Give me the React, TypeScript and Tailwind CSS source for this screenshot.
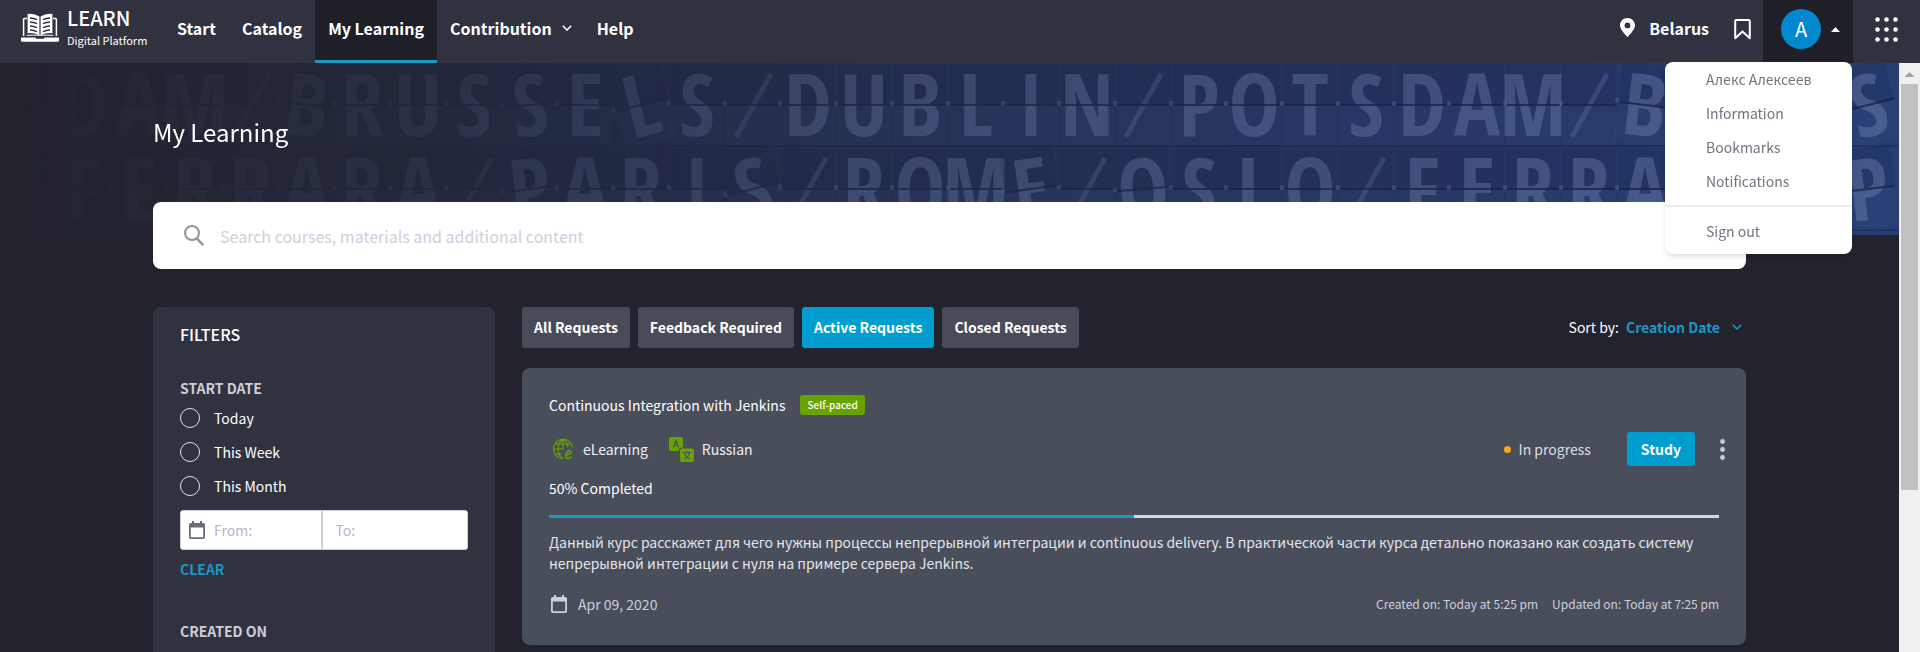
import React from "react";

const TOP_ROW = "SDAM/BRUSSELS/DUBLIN/POTSDAM/BRUSS";
const BOTTOM_ROW = "/FERRARA/PARIS/ROME/OSLO/FERRARA/P";
const TOP_TILT: Record<number, number> = { 5: 7, 9: -5, 11: -14, 29: 7, 33: -14 };
const BOTTOM_TILT: Record<number, number> = { 9: -7, 13: -14, 18: -8, 20: -5, 33: -7 };

function BoardRow({ text, tilt, mid }: { text: string; tilt: Record<number, number>; mid: number }) {
  return (
    <g>
      {text.split("").map((ch, i) => {
        const x = 28 + i * 56 - Math.round(i / 4);
        return (
          <g key={i} transform={`rotate(${tilt[i] ?? 0} ${x} ${mid})`}>
            <rect x={x - 27} y={mid - 41} width={54} height={41} fill="#141a36" opacity={0.14} />
            <rect x={x - 27} y={mid + 1} width={54} height={39} fill="#5a6ea6" opacity={0.07} />
            {ch === "/" ? (
              <path d={`M${x + 18} ${mid - 31} L${x - 17} ${mid + 32}`} stroke="#8f9fcb" strokeWidth={5} opacity={0.2} />
            ) : (
              <text
                x={x}
                y={mid + 31}
                textAnchor="middle"
                fontSize={86}
                fontWeight={700}
                fill="#8f9fcb"
                opacity={0.3}
                fontFamily="'Open Sans Condensed','Roboto Condensed','Liberation Sans Narrow','Liberation Sans',sans-serif"
              >
                {ch}
              </text>
            )}
            <rect x={x - 27} y={mid - 1} width={54} height={2} fill="#1b2341" opacity={0.8} />
            <rect x={x - 30} y={mid - 4} width={4} height={5} fill="#5b6c9b" opacity={0.4} />
          </g>
        );
      })}
      <rect x={0} y={mid + 40} width={1920} height={2} fill="#161c36" opacity={0.35} />
    </g>
  );
}

function Board() {
  return (
    <svg aria-hidden="true" className="absolute inset-0 h-full w-full" viewBox="0 0 1899 172" preserveAspectRatio="xMaxYMin slice">
      <defs>
        <linearGradient id="bg" x1="0" x2="1" y1="0" y2="0">
          <stop offset="0" stopColor="#22232d" />
          <stop offset="0.22" stopColor="#22273a" />
          <stop offset="0.5" stopColor="#252f54" />
          <stop offset="0.78" stopColor="#253563" />
          <stop offset="1" stopColor="#263e74" />
        </linearGradient>
        <linearGradient id="fade" x1="0" x2="1" y1="0" y2="0">
          <stop offset="0.01" stopColor="#fff" stopOpacity="0" />
          <stop offset="0.1" stopColor="#fff" stopOpacity="0.12" />
          <stop offset="0.25" stopColor="#fff" stopOpacity="0.3" />
          <stop offset="0.45" stopColor="#fff" stopOpacity="0.75" />
          <stop offset="0.9" stopColor="#fff" stopOpacity="1" />
        </linearGradient>
        <mask id="m" style={{ maskType: "alpha" }}>
          <rect width="1899" height="172" fill="url(#fade)" />
        </mask>
      </defs>
      <rect width="1899" height="172" fill="url(#bg)" />
      <g mask="url(#m)">
        <BoardRow text={TOP_ROW} tilt={TOP_TILT} mid={42} />
        <BoardRow text={BOTTOM_ROW} tilt={BOTTOM_TILT} mid={126} />
      </g>
    </svg>
  );
}

function Logo() {
  return (
    <svg aria-hidden="true" viewBox="0 0 38 30" className="h-[30px] w-[38px]" fill="none">
      <path d="M6 5.5H3.4Q2.6 5.5 2.6 6.4V23M32 5.5H34.6Q35.4 5.5 35.4 6.4V23" stroke="#fff" strokeWidth="1.5" />
      <path d="M6.6 1Q13 .2 18.4 3.4V22.4Q13 19.6 6.6 20.2Z" fill="#fff" />
      <path d="M31.4 1Q25 .2 19.6 3.4V22.4Q25 19.6 31.4 20.2Z" fill="#fff" />
      <path d="M5.6 22.2H32.4" stroke="#fff" strokeWidth="1" />
      <path
        d="M9 5Q12.6 5 16 6.6M9 9Q12.6 9 16 10.6M9 13Q12.6 13 16 14.6M9 17Q12.6 17 16 18.6M29 5Q25.4 5 22 6.6M29 9Q25.4 9 22 10.6M29 13Q25.4 13 22 14.6M29 17Q25.4 17 22 18.6"
        stroke="#31323f"
        strokeWidth="1.3"
      />
      <path d="M0 24.5H14L15.5 25.8H22.5L24 24.5H38V27.6Q38 28.8 36.6 28.8H1.4Q0 28.8 0 27.6Z" fill="#fff" />
    </svg>
  );
}

function Chevron({ className }: { className: string }) {
  return (
    <svg aria-hidden="true" viewBox="0 0 10 6" className={className} fill="none" stroke="currentColor" strokeWidth="1.6">
      <path d="M.8.8 5 5 9.2.8" />
    </svg>
  );
}

function CalendarIcon({ className }: { className: string }) {
  return (
    <svg aria-hidden="true" viewBox="0 0 16 18" className={className}>
      <path
        fill="currentColor"
        fillRule="evenodd"
        d="M3 0h2v2h6V0h2v2h1.2Q16 2 16 3.8v12.4Q16 18 14.2 18H1.8Q0 18 0 16.2V3.8Q0 2 1.8 2H3ZM1.8 6.4v9.8h12.4V6.4Z"
      />
    </svg>
  );
}

function GlobeIcon() {
  return (
    <svg aria-hidden="true" viewBox="0 0 22 22" className="h-[22px] w-[22px]" fill="none" stroke="#67a300" strokeWidth="1.2">
      <path d="M20.6 9.5A9.6 9.6 0 1 0 11 20.6M11 1.4V11M11 1.4C7.5 3.5 6 7 6 11S7.5 18.6 11 20.6M11 1.4C14 3.2 15.8 6 16 9.5M2.8 6H19.2M1.4 11H11.5M2.8 16H9.5" />
      <path d="M13.4 17 19.2 15.4C19.2 12.8 17.4 12 15.8 13.2 13.6 14.9 12.8 19.8 15.4 20.4 17 20.7 18.2 19.6 19.2 18.4" strokeWidth="1.5" />
    </svg>
  );
}

function LanguageIcon() {
  return (
    <svg aria-hidden="true" viewBox="0 0 25 25" className="h-[25px] w-[25px]">
      <rect width="14" height="14" rx="2" fill="#67a300" />
      <path d="M4.3 10.5 7 3.5 9.700 10.500M5.300 8.200H8.700" stroke="#494e5b" strokeWidth="1.2" fill="none" />
      <rect x="10" y="10.5" width="15" height="14.5" rx="3" fill="#494e5b" />
      <rect x="11" y="11.5" width="14" height="13.5" rx="2" fill="#67a300" />
      <path d="M14 15.5H22M18 14V15.5M15.5 16C16 18.500 18 20.500 21 22M20.500 16C20 18.500 18 20.500 15 22" stroke="#494e5b" strokeWidth="1.2" fill="none" />
    </svg>
  );
}

const navLink = "flex h-full items-center px-[13px] pb-2";

function Header() {
  return (
    <header className="relative z-10 flex h-[63px] shrink-0 bg-[#31323f] text-[16px] leading-6 font-bold text-white">
      <a href="#" className="flex items-start gap-2 pt-[13px] pl-[21px] font-normal">
        <Logo />
        <span className="flex w-[97px] flex-col whitespace-nowrap">
          <span className="-mt-[7px] text-[20px] leading-[24px] font-medium">LEARN</span>
          <span className="text-[11px] leading-5">Digital Platform</span>
        </span>
      </a>
      <nav className="flex h-full">
        <a href="#" className={navLink}>Start</a>
        <a href="#" className={navLink}>Catalog</a>
        <a href="#" aria-current="page" className="flex h-full items-center border-b-[3px] border-[#1c97c1] bg-[#1f2027] px-[13px] pb-[5px]">
          My Learning
        </a>
        <button type="button" className="flex h-full items-center gap-[10px] pr-3 pb-2 pl-[13px]">
          Contribution
          <Chevron className="h-[6px] w-[10px]" />
        </button>
        <a href="#" className={navLink}>Help</a>
      </nav>
      <div className="ml-auto flex h-full items-center">
        <button type="button" className="flex h-full items-center gap-[14px] pb-2">
          <svg aria-hidden="true" viewBox="0 0 15 19" className="h-[19px] w-[15px]">
            <path fill="#fff" fillRule="evenodd" d="M7.5 0C11.7 0 15 3.2 15 7.3 15 12.2 7.5 19 7.5 19S0 12.2 0 7.3C0 3.2 3.3 0 7.5 0Zm0 4.5a2.9 2.9 0 1 0 0 5.8 2.9 2.9 0 0 0 0-5.8Z" />
          </svg>
          Belarus
        </button>
        <button type="button" aria-label="Bookmarks" className="h-full pr-3 pb-[5px] pl-[25px]">
          <svg aria-hidden="true" viewBox="0 0 17 21" className="h-[21px] w-[17px]" fill="none" stroke="#fff" strokeWidth="2">
            <path d="M1.2 19.2V2.2Q1.2 1 2.4 1H14.6Q15.8 1 15.8 2.2V19.2L8.5 12.4Z" strokeLinejoin="round" />
          </svg>
        </button>
        <button type="button" aria-label="Account" aria-expanded="true" className="flex h-full items-center gap-[10px] bg-[#1f2027] pr-[13px] pb-[5px] pl-[18px]">
          <span className="flex size-10 items-center justify-center rounded-full bg-[#0288d1] text-[20px] font-normal">A</span>
          <svg aria-hidden="true" viewBox="0 0 9 5" className="h-[5px] w-[9px]"><path d="M0 5 4.5 0 9 5Z" fill="#fff" /></svg>
        </button>
        <button type="button" aria-label="Applications" className="h-full px-[22px] pb-[5px]">
          <svg aria-hidden="true" viewBox="0 0 23 25" className="h-[25px] w-[23px]" fill="#fff">
            {[2.5, 11.5, 20.5].map((x) => [2.5, 12.5, 22.5].map((y) => <circle key={`${x}-${y}`} cx={x} cy={y} r={2.3} />))}
          </svg>
        </button>
      </div>
      <ul className="absolute top-[62px] right-[68px] w-[187px] rounded-lg bg-white pb-[6px] text-[14px] leading-[34px] font-normal whitespace-nowrap text-[#72747f] shadow-md">
        <li><a href="#" className="block pl-[41px]">Алекс Алексеев</a></li>
        <li><a href="#" className="block pl-[41px]">Information</a></li>
        <li><a href="#" className="block pl-[41px]">Bookmarks</a></li>
        <li><a href="#" className="block pl-[41px]">Notifications</a></li>
        <li className="mt-[7px] border-t-2 border-[#ededf0] pt-[7px]"><a href="#" className="block pl-[41px]">Sign out</a></li>
      </ul>
    </header>
  );
}

function Filters() {
  return (
    <aside className="w-[342px] shrink-0 rounded-t-lg bg-[#31323f] px-[27px] pt-[15px] text-[14px] text-white">
      <h2 className="text-[16px] leading-6 font-medium">FILTERS</h2>
      <form className="pt-[32px]">
        <fieldset className="min-w-0">
          <legend className="pb-[10px] leading-5 font-bold text-[#cdced8]">START DATE</legend>
          <div className="flex flex-col gap-[14px]">
            {["Today", "This Week", "This Month"].map((label) => (
              <label key={label} className="flex items-center gap-[14px] leading-5">
                <input type="radio" name="start" className="size-5 appearance-none rounded-full border border-[#e4e4ea]" />
                {label}
              </label>
            ))}
          </div>
          <div className="mt-[14px] flex h-10 overflow-hidden rounded-[3px] border border-[#cfd0d8] bg-white">
            <label className="flex min-w-0 flex-1 items-center gap-[9px] pl-2 text-[#6b6c79]">
              <CalendarIcon className="h-[18px] w-[16px] shrink-0" />
              <input aria-label="From" placeholder="From:" className="w-0 flex-1 outline-none placeholder:text-[#b5b6c4]" />
            </label>
            <label className="flex min-w-0 flex-1 border-l-2 border-[#cfd0d8] pl-[13px] text-[#6b6c79]">
              <input aria-label="To" placeholder="To:" className="w-0 flex-1 outline-none placeholder:text-[#b5b6c4]" />
            </label>
          </div>
          <button type="reset" className="mt-[9px] block leading-5 font-bold text-[#1c97c8]">CLEAR</button>
        </fieldset>
      </form>
      <h3 className="mt-[42px] leading-5 font-bold text-[#cdced8]">CREATED ON</h3>
    </aside>
  );
}

function RequestTabs() {
  return (
    <div className="flex gap-2 text-[14px] leading-5 font-bold text-white">
      {["All Requests", "Feedback Required", "Active Requests", "Closed Requests"].map((t) => (
        <button
          key={t}
          type="button"
          className={t === "Active Requests" ? "h-[41px] rounded-[3px] bg-[#009ece] px-3 pb-[2px]" : "h-[41px] rounded-[3px] bg-[#494b59] px-3 pb-[2px]"}
        >
          {t}
        </button>
      ))}
    </div>
  );
}

function CourseCard() {
  const progress = 50;
  return (
    <article className="mt-5 rounded-lg bg-[#494e5b] px-[27px] pt-[27px] pb-[31px] text-[14px] leading-5 text-white">
      <div className="flex items-center gap-[15px]">
        <h2>Continuous Integration with Jenkins</h2>
        <span className="rounded-[3px] bg-[#67a300] px-[7px] text-[10px] leading-5 font-medium">Self-paced</span>
      </div>
      <div className="mt-[17px] flex items-center text-[#f0f0f4]">
        <span className="flex items-center gap-[9px] pl-[3px]"><GlobeIcon />eLearning</span>
        <span className="flex items-center gap-2 pl-[21px]"><LanguageIcon />Russian</span>
        <span className="ml-auto flex items-center gap-2 text-[#dcdde4]"><span className="size-[7px] rounded-full bg-[#f9a61a]" />In progress</span>
        <button type="button" className="ml-[36px] h-[34px] rounded-[3px] bg-[#009ece] px-[14px] font-bold text-white">Study</button>
        <button type="button" aria-label="More" className="-mr-[14px] ml-[17px] px-2">
          <svg aria-hidden="true" viewBox="0 0 5 21" className="h-[21px] w-[5px]" fill="#cdced8">
            <circle cx="2.5" cy="2.5" r="2.4" /><circle cx="2.5" cy="10.5" r="2.4" /><circle cx="2.5" cy="18.5" r="2.4" />
          </svg>
        </button>
      </div>
      <p className="mt-[12px]">50% Completed</p>
      <div role="progressbar" aria-valuenow={progress} aria-label="Completed" className="mt-[17px] h-[3px] bg-[#d9d6da]">
        <div className="h-full bg-[#1c97c1]" style={{ width: `${progress}%` }} />
      </div>
      <p className="mt-[14px] leading-[21px] text-[#e4e5ea]">
        Данный курс расскажет для чего нужны процессы непрерывной интеграции и continuous delivery. В практической части курса детально показано как создать систему непрерывной интеграции с нуля на примере сервера Jenkins.
      </p>
      <div className="mt-[20px] flex items-center gap-[11px] pl-[2px] text-[#cdd0dc]">
        <CalendarIcon className="h-[18px] w-[16px]" />
        Apr 09, 2020
        <span className="ml-auto flex gap-[14px] text-[12px]"><span>Created on: Today at 5:25 pm</span><span>Updated on: Today at 7:25 pm</span></span>
      </div>
    </article>
  );
}

export default function App() {
  return (
    <div className="flex h-screen flex-col overflow-hidden bg-[#22232d] font-['Noto_Sans_CJK_SC','Noto_Sans',sans-serif]">
      <Header />
      <div className="flex min-h-0 flex-1">
        <main className="relative flex min-w-0 flex-1 flex-col overflow-hidden px-[153px]">
          <div className="absolute inset-x-0 top-0 h-[172px] overflow-hidden"><Board /></div>
          <h1 className="relative pt-[49px] text-[24px] leading-[40px] text-white">My Learning</h1>
          <label className="relative mt-[50px] flex h-[67px] shrink-0 items-center gap-4 rounded-lg bg-white pr-4 pl-[31px]">
            <svg aria-hidden="true" viewBox="0 0 20 21" className="h-[21px] w-[20px]" fill="none" stroke="#959595" strokeWidth="2">
              <circle cx="8" cy="8" r="7" /><path d="M12.8 13.4 19.2 20.2" strokeWidth="2.4" />
            </svg>
            <input aria-label="Search" placeholder="Search courses, materials and additional content" className="flex-1 text-[16px] leading-6 outline-none placeholder:text-[#cdd0dc]" />
          </label>
          <div className="mt-[38px] flex min-h-0 flex-1 gap-[27px]">
            <Filters />
            <section className="min-w-0 flex-1">
              <div className="flex items-center justify-between">
                <RequestTabs />
                <label className="flex items-center gap-[7px] pr-1 pb-[2px] text-[14px] leading-5 text-white">
                  Sort by:
                  <span className="flex items-center gap-3 text-[#1c97c8]">
                    <select className="appearance-none bg-transparent font-bold outline-none"><option>Creation Date</option></select>
                    <Chevron className="h-[6px] w-[10px]" />
                  </span>
                </label>
              </div>
              <CourseCard />
            </section>
          </div>
        </main>
        <div aria-hidden="true" className="flex w-[21px] shrink-0 flex-col bg-[#f0f0f0]">
          <svg viewBox="0 0 21 21" className="h-[21px] w-[21px]"><path d="M5.5 14 10.5 9 15.5 14Z" fill="#a3a3a3" /></svg>
          <div className="mx-[2px] h-[69%] bg-[#c1c1c1]" />
        </div>
      </div>
    </div>
  );
}
